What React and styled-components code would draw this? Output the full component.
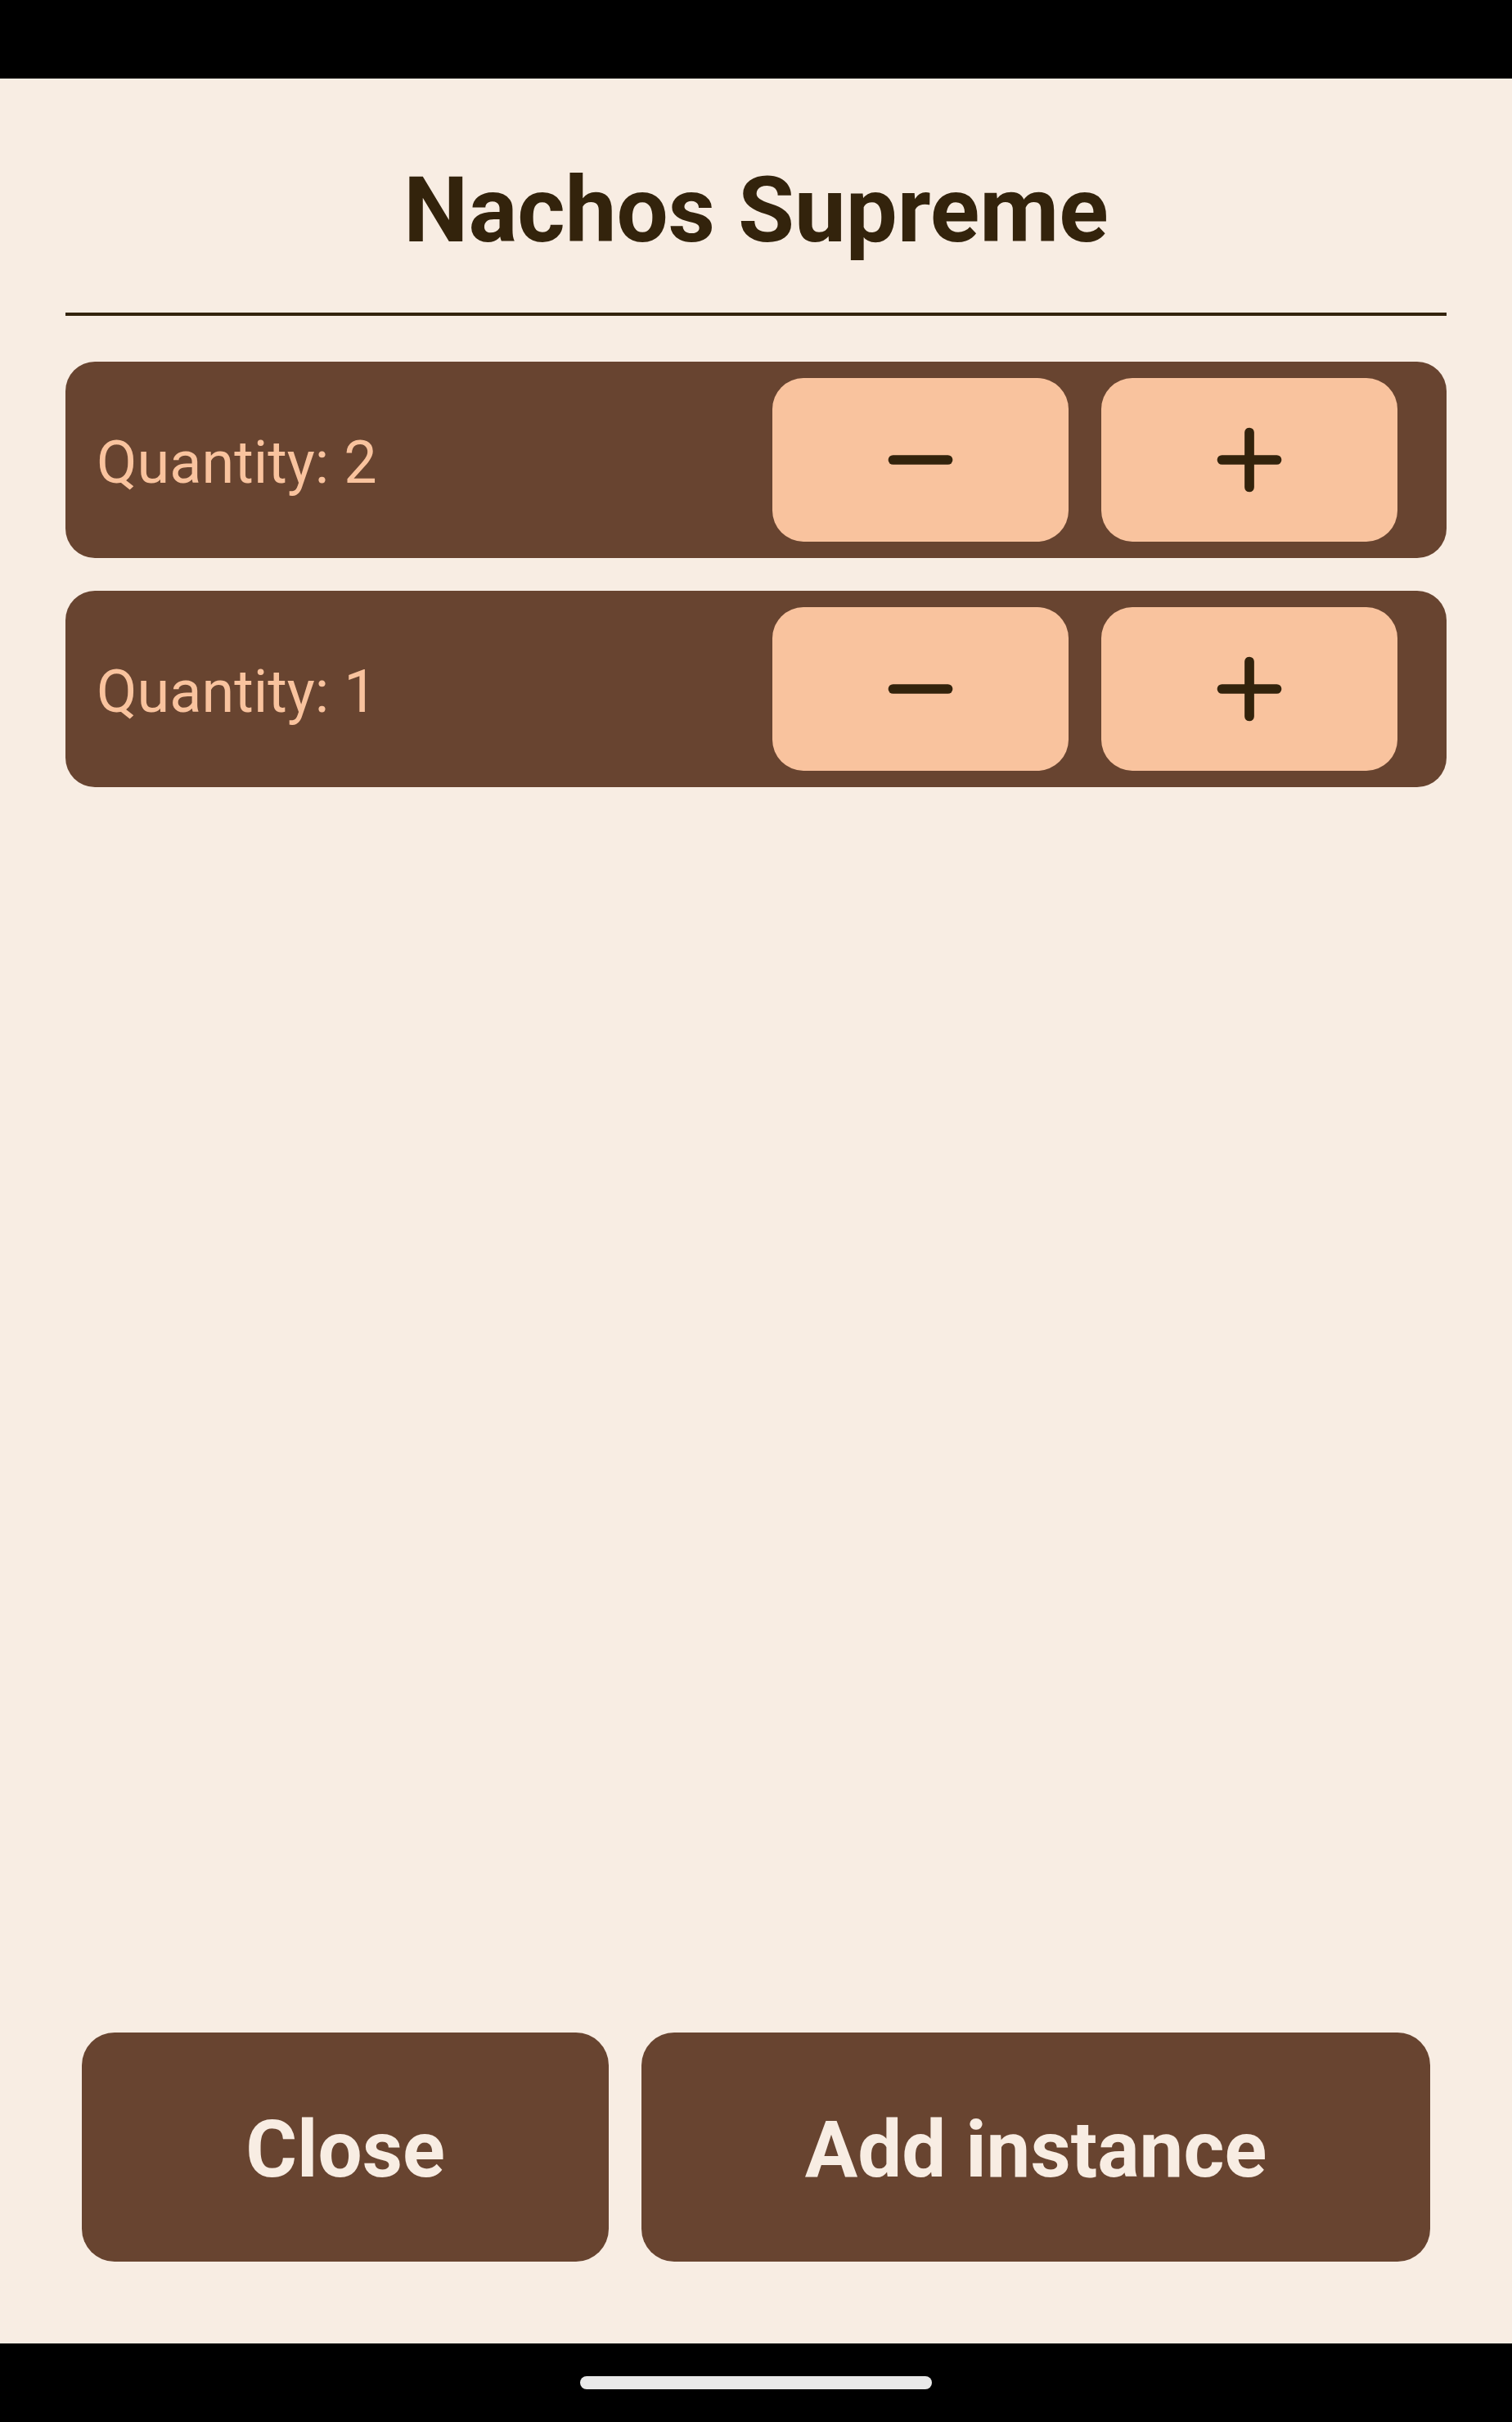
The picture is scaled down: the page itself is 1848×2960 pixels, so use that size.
import styled, { createGlobalStyle } from "styled-components";

const GlobalStyle = createGlobalStyle`
  html, body {
    margin: 0;
    padding: 0;
    background: #000;
  }
  body {
    font-family: Roboto, "Noto Sans", sans-serif;
  }
`;

const Screen = styled.div`
  display: flex;
  flex-direction: column;
  width: 1848px;
  height: 2960px;
  background: #000;
`;

const SystemBar = styled.div`
  flex: 0 0 96px;
  background: #000;
  display: flex;
  align-items: center;
  justify-content: center;
`;

const HomePill = styled.div`
  width: 430px;
  height: 16px;
  border-radius: 8px;
  background: #e9e9e9;
`;

const Sheet = styled.main`
  flex: 1;
  display: flex;
  flex-direction: column;
  background: #f8ede3;
  padding: 95px 80px 100px;
`;

const Title = styled.h1`
  margin: 0;
  font-size: 112px;
  line-height: 132px;
  font-weight: 700;
  text-align: center;
  color: #33230c;
`;

const Divider = styled.hr`
  margin: 59px 0 56px;
  border: 0;
  height: 4px;
  background: #33230c;
`;

const InstanceList = styled.div`
  display: flex;
  flex-direction: column;
  gap: 40px;
  flex: 1;
`;

const InstanceRow = styled.div`
  display: flex;
  align-items: center;
  height: 240px;
  box-sizing: border-box;
  padding: 20px 60px 20px 38px;
  border-radius: 36px;
  background: #684430;
`;

const Quantity = styled.span`
  flex: 1;
  font-size: 72px;
  color: #f9c39e;
  padding-top: 6px;
`;

const Stepper = styled.div`
  display: flex;
  gap: 40px;
`;

const StepButton = styled.button`
  width: 362px;
  height: 200px;
  border: 0;
  border-radius: 38px;
  background: #f9c39e;
  display: flex;
  align-items: center;
  justify-content: center;
  padding: 0;
  cursor: pointer;
`;

const Actions = styled.div`
  display: grid;
  grid-template-columns: 644fr 964fr;
  gap: 40px;
  padding: 0 20px;
`;

const ActionButton = styled.button`
  height: 280px;
  border: 0;
  border-radius: 40px;
  background: #684430;
  color: #f8ede3;
  font-family: Roboto, "Noto Sans", sans-serif;
  font-size: 96px;
  font-weight: 700;
  padding: 6px 0 0;
  cursor: pointer;
`;

const StepIcon = ({ plus }) => (
  <svg width="134" height="134" viewBox="0 0 24 24" fill="none">
    <path
      d={plus ? "M6 12h12M12 6v12" : "M6 12h12"}
      stroke="#33230c"
      strokeWidth="2.1"
      strokeLinecap="round"
    />
  </svg>
);

const instances = [{ id: 1, qty: 2 }, { id: 2, qty: 1 }];

export default function App() {
  return (
    <Screen>
      <GlobalStyle />
      <SystemBar />
      <Sheet>
        <Title>Nachos Supreme</Title>
        <Divider />
        <InstanceList>
          {instances.map((item) => (
            <InstanceRow key={item.id}>
              <Quantity>Quantity: {item.qty}</Quantity>
              <Stepper>
                <StepButton aria-label="Decrease">
                  <StepIcon />
                </StepButton>
                <StepButton aria-label="Increase">
                  <StepIcon plus />
                </StepButton>
              </Stepper>
            </InstanceRow>
          ))}
        </InstanceList>
        <Actions>
          <ActionButton>Close</ActionButton>
          <ActionButton>Add instance</ActionButton>
        </Actions>
      </Sheet>
      <SystemBar>
        <HomePill />
      </SystemBar>
    </Screen>
  );
}
